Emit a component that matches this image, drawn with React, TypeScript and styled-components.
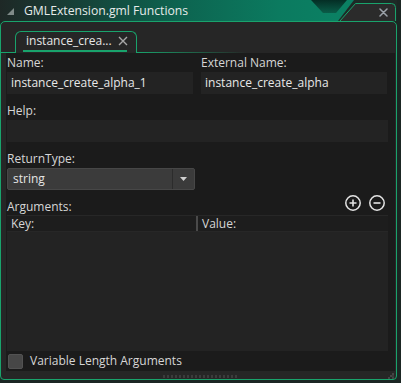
import React from 'react';
import styled, { createGlobalStyle } from 'styled-components';

const Global = createGlobalStyle`
  html, body { margin: 0; padding: 0; background: #1b2623; }
  body { width: 401px; height: 383px; overflow: hidden; font-family: "Open Sans", "Noto Sans", sans-serif; }
  * { box-sizing: border-box; }
`;

const GREEN = '#19a36c';

const Screen = styled.div`
  width: 401px;
  height: 383px;
  background: #1b2623;
  display: flex;
  flex-direction: column;
`;

const Window = styled.div`
  width: 397px;
  height: 380px;
  display: flex;
  flex-direction: column;
`;

const TitleBar = styled.div`
  position: relative;
  height: 21px;
  flex: none;
  display: flex;
  align-items: center;
  padding-left: 7px;
  background: linear-gradient(90deg, #1e2826 0%, #15443a 22%, #0d6450 45%, #0b7a5f 70%, #0b8063 85%);
`;

const TitleDecor = styled.svg`
  position: absolute;
  left: 0;
  top: 0;
  width: 397px;
  height: 21px;
  pointer-events: none;
`;

const Collapse = styled.svg`
  position: relative;
  width: 7px;
  height: 7px;
  margin-right: 10px;
  margin-top: 2px;
  flex: none;
`;

const Title = styled.div`
  position: relative;
  flex: 1;
  color: #e6ebea;
  font-size: 12.2px;
  line-height: 21px;
  white-space: nowrap;
`;

const CloseButton = styled.div`
  position: relative;
  width: 16px;
  height: 16px;
  margin-right: 6px;
  margin-top: 3px;
  display: flex;
  align-items: center;
  justify-content: center;
`;

const Body = styled.div`
  flex: 1;
  display: flex;
  flex-direction: column;
  border: 1px solid ${GREEN};
  border-radius: 5px 5px 4px 4px;
  background: #262626;
  padding: 0 1px 0 5px;
`;

const TabStrip = styled.div`
  height: 31px;
  flex: none;
  display: flex;
  align-items: flex-end;
  margin-left: -5px;
`;

const StripEdge = styled.div`
  width: 14px;
  height: 1px;
  background: ${GREEN};
`;

const StripFade = styled.div`
  flex: 1;
  height: 1px;
  background: linear-gradient(90deg, ${GREEN} 0px, rgba(25, 163, 108, 0) 110px);
`;

const Tab = styled.div`
  width: 122px;
  height: 22px;
  border: 1px solid ${GREEN};
  border-bottom: none;
  border-radius: 6px 6px 0 0;
  background: #262626;
  display: flex;
  flex-direction: column;
  padding: 1px 0 1px;
`;

const TabRow = styled.div`
  height: 16px;
  display: flex;
  align-items: center;
  padding-left: 10px;
  gap: 6px;
`;

const TabText = styled.span`
  color: #e6e6e6;
  font-size: 12px;
  line-height: 16px;
  white-space: nowrap;
`;

const TabUnderline = styled.div`
  height: 2px;
  margin: 1px 0 0 7px;
  width: 104px;
  background: ${GREEN};
`;

const Panel = styled.div`
  flex: 1;
  background: #1b1b1b;
  display: flex;
  flex-direction: column;
  padding: 1px 7px 0 1px;
`;

const Row = styled.div<{ $top?: number }>`
  display: grid;
  grid-template-columns: 186px 186px;
  column-gap: 8px;
  margin-top: ${(p) => p.$top ?? 0}px;
`;

const Field = styled.div<{ $top?: number }>`
  display: flex;
  flex-direction: column;
  gap: 1px;
  margin-top: ${(p) => p.$top ?? 0}px;
`;

const Label = styled.div`
  color: #d6d6d6;
  font-size: 12px;
  line-height: 17px;
  height: 17px;
  white-space: nowrap;
`;

const Input = styled.div`
  height: 22px;
  background: #232323;
  color: #e8e8e8;
  font-size: 12px;
  line-height: 22px;
  padding-left: 4px;
  white-space: nowrap;
`;

const Select = styled.div`
  width: 188px;
  height: 22px;
  display: flex;
  background: #3b3b3b;
  border: 1px solid #474747;
  border-radius: 2px;
`;

const SelectValue = styled.div`
  flex: 1;
  color: #e6e6e6;
  font-size: 12px;
  line-height: 20px;
  padding-left: 5px;
`;

const DropButton = styled.div`
  width: 22px;
  border-left: 1px solid #2c2c2c;
  display: flex;
  align-items: center;
  justify-content: center;
`;

const ArgsHeader = styled.div`
  display: flex;
  align-items: center;
  margin-top: 8px;
  height: 17px;
`;

const Spacer = styled.div`
  flex: 1;
`;

const IconGroup = styled.div`
  display: flex;
  gap: 8px;
  margin: -7px 3px 0 0;
`;

const RoundIcon = styled.svg`
  width: 16px;
  height: 16px;
  display: block;
`;

const Table = styled.div`
  flex: 1;
  display: flex;
  flex-direction: column;
  background: #232323;
`;

const TableHead = styled.div`
  height: 17px;
  display: grid;
  grid-template-columns: 189px 2px 1fr;
  align-items: center;
  background: #1d1d1d;
  border-top: 1px solid #272727;
  border-bottom: 1px solid #272727;
`;

const HeadCell = styled.div`
  color: #d6d6d6;
  font-size: 12px;
  line-height: 15px;
  padding-left: 4px;
`;

const HeadSep = styled.div`
  height: 15px;
  background: #4a4a4a;
`;

const CheckRow = styled.div`
  height: 20px;
  flex: none;
  display: flex;
  align-items: center;
  gap: 7px;
  padding-left: 1px;
`;

const CheckBox = styled.div`
  width: 15px;
  height: 15px;
  background: #474747;
  border: 1px solid #525252;
  border-radius: 2px;
`;

const CheckLabel = styled.span`
  color: #d6d6d6;
  font-size: 12px;
  line-height: 16px;
`;

const BottomStrip = styled.div`
  height: 8px;
  flex: none;
  display: grid;
  grid-template-columns: 1fr 76px 1fr;
  align-items: center;
`;

const Grip = styled.div`
  grid-column: 2;
  height: 3px;
  margin-top: 3px;
  background-image:
    repeating-linear-gradient(90deg, #3c3c3c 0 2px, transparent 2px 4px);
`;

const CornerGrip = styled.svg`
  grid-column: 3;
  justify-self: end;
  align-self: end;
  width: 6px;
  height: 6px;
  margin-right: 1px;
`;

export default function App() {
  return (
    <Screen>
      <Global />
      <Window>
        <TitleBar>
          <TitleDecor viewBox="0 0 397 21">
            <defs>
              <linearGradient id="notch" x1="0" y1="0" x2="0" y2="1">
                <stop offset="0" stopColor="#042e25" />
                <stop offset="1" stopColor="#0a5c48" />
              </linearGradient>
            </defs>
            <polygon points="311,0 347,0 336,13 323,13" fill="url(#notch)" />
            <polygon points="354,0 397,0 397,21 338,21" fill="#1d2a26" />
            <path
              d="M339.5,21.5 L355.5,3.5 L391.5,3.5 Q395.5,3.5 395.5,7.5 L395.5,21.5 Z"
              fill="#2b2b2b"
              stroke={GREEN}
              strokeWidth="1"
            />
          </TitleDecor>
          <Collapse viewBox="0 0 7 7">
            <polygon points="7,0 7,7 0,7" fill="#7f8a88" />
          </Collapse>
          <Title>GMLExtension.gml Functions</Title>
          <CloseButton>
            <svg width="9" height="9" viewBox="0 0 9 9">
              <path d="M1,1 L8,8 M8,1 L1,8" stroke="#9aa1a8" strokeWidth="1.5" strokeLinecap="round" />
            </svg>
          </CloseButton>
        </TitleBar>
        <Body>
          <TabStrip>
            <StripEdge />
            <Tab>
              <TabRow>
                <TabText>instance_crea...</TabText>
                <svg width="10" height="10" viewBox="0 0 10 10">
                  <path d="M1,1 L9,9 M9,1 L1,9" stroke="#a8a8a8" strokeWidth="1.4" />
                </svg>
              </TabRow>
              <TabUnderline />
            </Tab>
            <StripFade />
          </TabStrip>
          <Panel>
            <Row>
              <Field>
                <Label>Name:</Label>
                <Input>instance_create_alpha_1</Input>
              </Field>
              <Field>
                <Label>External Name:</Label>
                <Input>instance_create_alpha</Input>
              </Field>
            </Row>
            <Field $top={8}>
              <Label>Help:</Label>
              <Input />
            </Field>
            <Field $top={8}>
              <Label>ReturnType:</Label>
              <Select>
                <SelectValue>string</SelectValue>
                <DropButton>
                  <svg width="7" height="4" viewBox="0 0 7 4">
                    <polygon points="0,0 7,0 3.5,4" fill="#d0d0d0" />
                  </svg>
                </DropButton>
              </Select>
            </Field>
            <ArgsHeader>
              <Label>Arguments:</Label>
              <Spacer />
              <IconGroup>
                <RoundIcon viewBox="0 0 16 16">
                  <circle cx="8" cy="8" r="7.2" fill="none" stroke="#e4e4e4" strokeWidth="1.5" />
                  <path d="M4.5,8 H11.5 M8,4.5 V11.5" stroke="#e4e4e4" strokeWidth="1.6" />
                </RoundIcon>
                <RoundIcon viewBox="0 0 16 16">
                  <circle cx="8" cy="8" r="7.2" fill="none" stroke="#e4e4e4" strokeWidth="1.5" />
                  <path d="M4.5,8 H11.5" stroke="#e4e4e4" strokeWidth="1.6" />
                </RoundIcon>
              </IconGroup>
            </ArgsHeader>
            <Table>
              <TableHead>
                <HeadCell>Key:</HeadCell>
                <HeadSep />
                <HeadCell>Value:</HeadCell>
              </TableHead>
            </Table>
            <CheckRow>
              <CheckBox />
              <CheckLabel>Variable Length Arguments</CheckLabel>
            </CheckRow>
          </Panel>
          <BottomStrip>
            <Grip />
            <CornerGrip viewBox="0 0 6 6">
              <rect x="4" y="0" width="2" height="2" fill="#444" />
              <rect x="2" y="2" width="2" height="2" fill="#444" />
              <rect x="4" y="2" width="2" height="2" fill="#3a3a3a" />
              <rect x="0" y="4" width="2" height="2" fill="#444" />
              <rect x="4" y="4" width="2" height="2" fill="#444" />
            </CornerGrip>
          </BottomStrip>
        </Body>
      </Window>
    </Screen>
  );
}
